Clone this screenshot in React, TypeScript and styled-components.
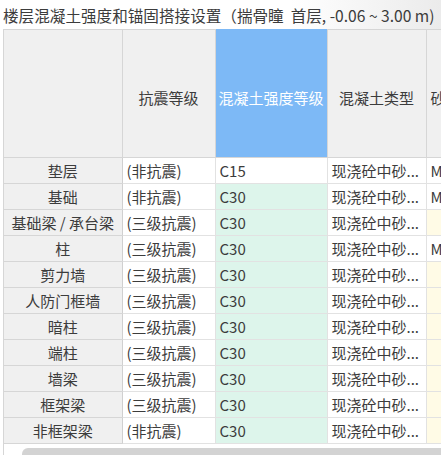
import React from "react";
import styled, { createGlobalStyle } from "styled-components";

const Global = createGlobalStyle`
  html, body {
    margin: 0;
    padding: 0;
    background: #ffffff;
  }
  body {
    font-family: "Noto Sans CJK SC", "Noto Sans", sans-serif;
  }
`;

const Panel = styled.div`
  width: 441px;
  height: 455px;
  overflow: hidden;
  display: flex;
  flex-direction: column;
  background: #ffffff;
`;

const TitleBar = styled.div`
  height: 29px;
  flex: none;
  padding-left: 3px;
  display: flex;
  align-items: center;
  font-size: 15.6px;
  color: #3c3c3c;
  white-space: nowrap;
  background: linear-gradient(to right, #ffffff 66%, #ebebeb 100%);
`;

const Body = styled.div`
  flex: 1;
  margin-left: 3px;
  border-left: 1px solid #d6d6d6;
  display: flex;
  flex-direction: column;
  overflow: hidden;
`;

const Grid = styled.table`
  border-collapse: collapse;
  table-layout: fixed;
  width: 560px;
  font-size: 15px;
  color: #3c3c3c;
`;

const HeadCell = styled.th<{ $active?: boolean; $left?: boolean }>`
  height: 128px;
  padding: 8px 0 0 ${(p) => (p.$left ? "4px" : "0")};
  box-sizing: border-box;
  font-weight: normal;
  text-align: ${(p) => (p.$left ? "left" : "center")};
  white-space: nowrap;
  overflow: hidden;
  background: ${(p) => (p.$active ? "#7db9f6" : "#f0f0f0")};
  color: ${(p) => (p.$active ? "#ffffff" : "#3c3c3c")};
  border: 1px solid #d6d6d6;
  border-left: none;
  border-top-color: ${(p) => (p.$active ? "#7db9f6" : "#d6d6d6")};
`;

const RowHead = styled.td`
  height: 26px;
  padding: 0;
  box-sizing: border-box;
  text-align: center;
  white-space: nowrap;
  background: #f0f0f0;
  border-right: 1px solid #d0d0d0;
  border-bottom: 1px solid #d6d6d6;
`;

type Tone = "plain" | "green" | "yellow";

const toneBg: Record<Tone, string> = {
  plain: "#ffffff",
  green: "#ddf5eb",
  yellow: "#fffbe6",
};

const Cell = styled.td<{ $tone?: Tone }>`
  height: 26px;
  padding: 0 0 0 4px;
  box-sizing: border-box;
  white-space: nowrap;
  overflow: hidden;
  background: ${(p) => toneBg[p.$tone || "plain"]};
  border-right: 1px solid #e2e2e2;
  border-bottom: 1px solid #e2e2e2;
`;

const Footer = styled.div`
  flex: 1;
  position: relative;
  min-height: 10px;
`;

const ScrollThumb = styled.div`
  position: absolute;
  left: 18px;
  right: -6px;
  top: 4px;
  height: 12px;
  border-radius: 6px;
  background: #d3d3d3;
`;

interface Row {
  name: string;
  seismic: string;
  grade: string;
  hasM: boolean;
}

const rows: Row[] = [
  { name: "垫层", seismic: "(非抗震)", grade: "C15", hasM: true },
  { name: "基础", seismic: "(非抗震)", grade: "C30", hasM: true },
  { name: "基础梁 / 承台梁", seismic: "(三级抗震)", grade: "C30", hasM: false },
  { name: "柱", seismic: "(三级抗震)", grade: "C30", hasM: true },
  { name: "剪力墙", seismic: "(三级抗震)", grade: "C30", hasM: false },
  { name: "人防门框墙", seismic: "(三级抗震)", grade: "C30", hasM: false },
  { name: "暗柱", seismic: "(三级抗震)", grade: "C30", hasM: false },
  { name: "端柱", seismic: "(三级抗震)", grade: "C30", hasM: false },
  { name: "墙梁", seismic: "(三级抗震)", grade: "C30", hasM: false },
  { name: "框架梁", seismic: "(三级抗震)", grade: "C30", hasM: false },
  { name: "非框架梁", seismic: "(非抗震)", grade: "C30", hasM: false },
];

export default function App() {
  return (
    <Panel>
      <Global />
      <TitleBar>楼层混凝土强度和锚固搭接设置（揣骨瞳&nbsp;&nbsp;首层, -0.06 ~ 3.00 m)</TitleBar>
      <Body>
        <Grid>
          <colgroup>
            <col style={{ width: 118 }} />
            <col style={{ width: 93 }} />
            <col style={{ width: 112 }} />
            <col style={{ width: 99 }} />
            <col style={{ width: 138 }} />
          </colgroup>
          <thead>
            <tr>
              <HeadCell />
              <HeadCell>抗震等级</HeadCell>
              <HeadCell $active>混凝土强度等级</HeadCell>
              <HeadCell>混凝土类型</HeadCell>
              <HeadCell $left>砂浆标号</HeadCell>
            </tr>
          </thead>
          <tbody>
            {rows.map((r, i) => (
              <tr key={r.name}>
                <RowHead>{r.name}</RowHead>
                <Cell>{r.seismic}</Cell>
                <Cell $tone={i === 0 ? "plain" : "green"}>{r.grade}</Cell>
                <Cell>现浇砼中砂...</Cell>
                <Cell $tone={r.hasM ? "plain" : "yellow"}>{r.hasM ? "M5" : ""}</Cell>
              </tr>
            ))}
          </tbody>
        </Grid>
        <Footer>
          <ScrollThumb />
        </Footer>
      </Body>
    </Panel>
  );
}
